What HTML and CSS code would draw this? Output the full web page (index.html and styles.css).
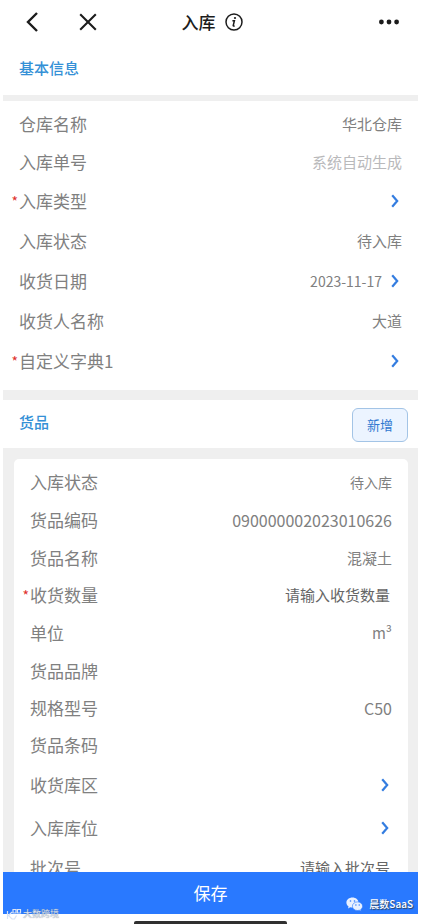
FILE: index.html
```html
<!DOCTYPE html>
<html lang="zh-CN">
<head>
<meta charset="utf-8">
<meta name="viewport" content="width=device-width, initial-scale=1">
<title>入库</title>
<link rel="stylesheet" href="styles.css">
</head>
<body>
<svg class="defs" aria-hidden="true">
  <symbol id="chevron" viewBox="0 0 8 14"><path d="M1.2 1.2 6.2 7 1.2 12.8" fill="none" stroke="currentColor" stroke-width="2.2"/></symbol>
</svg>
<div class="app">
  <header class="nav">
    <div class="nav-side">
      <button class="icon-btn" type="button" aria-label="返回"><svg width="14" height="22" viewBox="0 0 14 22"><path d="M12 2 3 11l9 9" fill="none" stroke="currentColor" stroke-width="2.4"/></svg></button>
      <button class="icon-btn" type="button" aria-label="关闭"><svg width="18" height="18" viewBox="0 0 18 18"><path d="m1.200 1.200 15.600 15.600m0-15.600-15.600 15.600" fill="none" stroke="currentColor" stroke-width="2.100"/></svg></button>
    </div>
    <div class="nav-title">
      <h1>入库</h1>
      <button class="icon-btn" type="button" aria-label="说明"><svg width="18" height="18" viewBox="0 0 18 18"><circle cx="9" cy="9" r="8" fill="none" stroke="currentColor" stroke-width="1.5"/><circle cx="10" cy="5" r="1.1" fill="currentColor"/><path d="M7.4 7.800h2L8.200 12.600q-.1.8 1.500.3" fill="none" stroke="currentColor" stroke-width="1.5"/></svg></button>
    </div>
    <div class="nav-side nav-end">
      <button class="icon-btn" type="button" aria-label="更多"><svg width="20" height="6" viewBox="0 0 20 6"><g fill="currentColor"><circle cx="2.4" cy="3" r="2.4"/><circle cx="10" cy="3" r="2.4"/><circle cx="17.6" cy="3" r="2.4"/></g></svg></button>
    </div>
  </header>

  <form class="form" id="inbound">
    <div class="section-head"><h2>基本信息</h2></div>
    <section class="group">
      <div class="row row-mid"><span class="label">仓库名称</span><span class="value">华北仓库</span></div>
      <div class="row row-mid"><label class="label" for="order-no">入库单号</label><input class="value auto" id="order-no" placeholder="系统自动生成" readonly></div>
      <div class="row row-pick"><span class="label required" id="l-type">入库类型</span><button class="picker" type="button" aria-labelledby="l-type"><svg class="chevron"><use href="#chevron"/></svg></button></div>
      <div class="row row-pick"><span class="label">入库状态</span><span class="value">待入库</span></div>
      <div class="row row-pick"><span class="label" id="l-date">收货日期</span><button class="picker" type="button" aria-labelledby="l-date v-date"><span class="date" id="v-date">2023-11-17</span><svg class="chevron"><use href="#chevron"/></svg></button></div>
      <div class="row row-pick"><span class="label">收货人名称</span><span class="value">大道</span></div>
      <div class="row row-pick"><span class="label required" id="l-dict">自定义字典1</span><button class="picker" type="button" aria-labelledby="l-dict"><svg class="chevron"><use href="#chevron"/></svg></button></div>
    </section>

    <div class="section-head goods-head"><h2>货品</h2><button class="add" type="button">新增</button></div>
    <section class="goods">
      <div class="card">
        <div class="row row-mid"><span class="label">入库状态</span><span class="value small">待入库</span></div>
        <div class="row row-mid"><span class="label">货品编码</span><span class="value code">090000002023010626</span></div>
        <div class="row"><span class="label">货品名称</span><span class="value">混凝土</span></div>
        <div class="row row-mid"><label class="label required" for="qty">收货数量</label><input class="value entry" id="qty" placeholder="请输入收货数量"></div>
        <div class="row row-mid"><span class="label">单位</span><span class="value">m³</span></div>
        <div class="row"><span class="label">货品品牌</span></div>
        <div class="row"><span class="label">规格型号</span><span class="value code">C50</span></div>
        <div class="row"><span class="label">货品条码</span></div>
        <div class="row row-tall"><span class="label" id="l-area">收货库区</span><button class="picker" type="button" aria-labelledby="l-area"><svg class="chevron"><use href="#chevron"/></svg></button></div>
        <div class="row row-tall"><span class="label" id="l-slot">入库库位</span><button class="picker" type="button" aria-labelledby="l-slot"><svg class="chevron"><use href="#chevron"/></svg></button></div>
        <div class="row row-mid"><label class="label" for="batch">批次号</label><input class="value entry" id="batch" placeholder="请输入批次号"></div>
      </div>
    </section>
  </form>

  <footer class="footer">
    <button class="save" type="submit" form="inbound">保存</button>
    <div class="home"></div>
    <div class="mark mark-left">
      <svg width="16" height="12" viewBox="0 0 16 12"><path d="M1.500 3v8M6 4 2.500 7.500 6 11h2.500l2-3.500M7 1.500h3v3.500H7zM11.500 1.500h3v3.500h-3z" fill="none" stroke="currentColor" stroke-width="1.2"/></svg>
      <span>大数跨境</span>
    </div>
    <div class="mark mark-right">
      <svg width="17" height="15" viewBox="0 0 17 15"><path d="M6.5.5C3 .5.4 2.7.4 5.5c0 1.600.8 3 2.200 3.900L2 11.500l2.300-1.200c.7.200 1.500.3 2.200.3 3.400 0 6-2.300 6-5.100S9.900.5 6.500.5z" fill="#e9f1ff"/><path d="M11.500 4.900c-2.900 0-5.100 1.900-5.100 4.300s2.200 4.300 5.100 4.300c.6 0 1.200-.1 1.800-.3l1.900 1-.5-1.700c1.200-.8 1.900-2 1.900-3.300 0-2.400-2.200-4.300-5.100-4.300z" fill="#e9f1ff" stroke="#2979ff" stroke-width=".6"/><g fill="#2979ff"><circle cx="4.500" cy="4" r=".8"/><circle cx="8.500" cy="4" r=".8"/><circle cx="9.900" cy="8" r=".7"/><circle cx="13.200" cy="8" r=".7"/></g></svg>
      <span>晨数SaaS</span>
    </div>
  </footer>
</div>
</body>
</html>
```
FILE: styles.css
```css
* { box-sizing: border-box; }
body {
  margin: 0;
  background: #fff;
  color: #808080;
  font: 15px/20px "Noto Sans CJK SC", sans-serif;
}
button, input { font: inherit; color: inherit; border: 0; padding: 0; background: none; }
h1, h2 { margin: 0; font-weight: 500; }
.defs { display: none; }
.app { height: 100vh; display: flex; flex-direction: column; padding: 0 9px 0 3px; }

.nav { display: flex; flex: none; align-items: center; height: 43px; padding: 0 19px 0 22px; color: #1c1c1c; }
.nav-side { display: flex; flex: 1; align-items: center; gap: 40px; }
.nav-end { justify-content: flex-end; }
.nav-title { display: flex; align-items: center; gap: 9px; }
.nav-title h1 { font-size: 17px; line-height: 24px; }
.icon-btn { display: flex; }

.form { flex: 1; min-height: 0; overflow: hidden; }
.section-head { display: flex; align-items: center; justify-content: space-between; height: 58px; padding: 0 10px 2px 16px; border-bottom: 6px solid #efefef; }
.section-head h2 { font-size: 15px; line-height: 20px; color: #3490d6; }
.goods-head { padding: 2px 10px 0 16px; border-top: 10px solid #efefef; border-bottom: 0; }
.goods-head h2 { padding-bottom: 6px; }
.add { width: 56px; height: 34px; border: 1px solid #a3c4e6; border-radius: 6px; background: #ecf4ff; color: #3078d0; font-size: 13px; }

.group { padding: 4px 16px 9px; }
.row { display: flex; align-items: center; justify-content: space-between; height: 37px; }
.row-mid { height: 38px; }
.row-pick { height: 40px; }
.row-tall { height: 43px; }
.label { position: relative; flex: none; font-size: 17px; line-height: 24px; }
.required::before { content: "*"; position: absolute; right: 100%; margin-right: 1px; color: #e0302c; font-size: 14px; }
.value { text-align: right; }
.small { font-size: 14px; }
.code { font-size: 16px; }
.date { font-size: 14px; }
input.value { flex: 1; min-width: 0; outline: 0; }
.auto::placeholder { color: #b9b9bb; opacity: 1; }
.entry { padding-right: 2px; }
.entry::placeholder { color: #666; opacity: 1; }
.picker { display: flex; flex: 1; align-items: center; justify-content: flex-end; gap: 9px; padding-right: 3px; }
.chevron { width: 8px; height: 14px; color: #347de0; }

.goods { padding: 11px 10px 0 11px; background: #efefef; }
.card { padding: 4px 16px; border-radius: 5px; background: #fff; }

.footer { position: relative; flex: none; }
.save { display: block; width: 100%; height: 42px; background: #2979ff; color: #fff; font-size: 17px; }
.home { width: 37%; height: 3px; margin: 7px auto 0; border-radius: 2px 2px 0 0; background: #303030; }
.mark { position: absolute; display: flex; align-items: center; }
.mark-left { left: 3px; bottom: 4px; gap: 1px; color: #d9e3f4; font-size: 9px; line-height: 12px; text-shadow: 0 0 1px #777; }
.mark-right { right: 5px; bottom: 10px; gap: 6px; color: #fff; font-size: 10px; line-height: 20px; font-weight: 500; text-shadow: 1px 1px 1px #345; }
```
